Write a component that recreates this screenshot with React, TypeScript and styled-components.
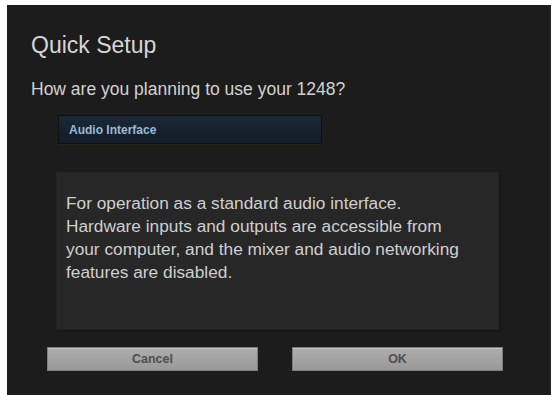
import React from 'react';
import styled, { createGlobalStyle } from 'styled-components';

const GlobalStyle = createGlobalStyle`
  html, body {
    margin: 0;
    padding: 0;
    background: #ffffff;
  }
  body {
    font-family: 'Liberation Sans', Arial, sans-serif;
  }
`;

const Page = styled.div`
  width: 551px;
  height: 395px;
  padding: 5px 0 0 7px;
  box-sizing: border-box;
  overflow: hidden;
`;

const Dialog = styled.div`
  height: 100%;
  background: #1c1c1c;
  border-right: 1px solid #2a2a2a;
  padding: 27px 0 0 24px;
  box-sizing: border-box;
  display: flex;
  flex-direction: column;
`;

const Title = styled.h1`
  margin: 0;
  font-size: 23px;
  font-weight: normal;
  line-height: 27px;
  color: #d6d6d6;
`;

const Question = styled.p`
  margin: 20px 0 0;
  font-size: 17.5px;
  line-height: 20px;
  color: #d2d2d2;
`;

const Select = styled.div`
  margin: 16px 0 0 27px;
  width: 264px;
  height: 29px;
  box-sizing: border-box;
  padding: 0 10px;
  display: flex;
  align-items: center;
  background: linear-gradient(#1b2836, #131c27);
  border: 1px solid #0c1016;
  box-shadow: 0 1px 0 #2a2118;
  font-size: 12px;
  font-weight: bold;
  color: #9cb9d6;
`;

const Description = styled.div`
  margin: 29px 0 0 26px;
  width: 441px;
  height: 156px;
  box-sizing: border-box;
  padding: 19px 9px;
  background: #272727;
  box-shadow: 0 0 0 1px #242424, 2px 2px 3px rgba(0, 0, 0, 0.35);
  font-size: 17.3px;
  line-height: 23px;
  color: #cfcfcf;
`;

const ButtonRow = styled.div`
  display: flex;
  gap: 34px;
  margin: 18px 0 0 16px;
`;

const Button = styled.button`
  width: 211px;
  height: 24px;
  padding: 0;
  border: 1px solid #7d7d7d;
  background: linear-gradient(#adadad, #999999);
  box-shadow: inset 0 1px 0 #c4c4c4;
  font-family: 'Liberation Sans', Arial, sans-serif;
  font-size: 12.5px;
  font-weight: bold;
  color: #4e4e4e;
  cursor: pointer;
`;

const App: React.FC = () => {
  return (
    <>
      <GlobalStyle />
      <Page>
        <Dialog>
          <Title>Quick Setup</Title>
          <Question>How are you planning to use your 1248?</Question>
          <Select>Audio Interface</Select>
          <Description>
            For operation as a standard audio interface.
            <br />
            Hardware inputs and outputs are accessible from
            <br />
            your computer, and the mixer and audio networking
            <br />
            features are disabled.
          </Description>
          <ButtonRow>
            <Button>Cancel</Button>
            <Button>OK</Button>
          </ButtonRow>
        </Dialog>
      </Page>
    </>
  );
};

export default App;
